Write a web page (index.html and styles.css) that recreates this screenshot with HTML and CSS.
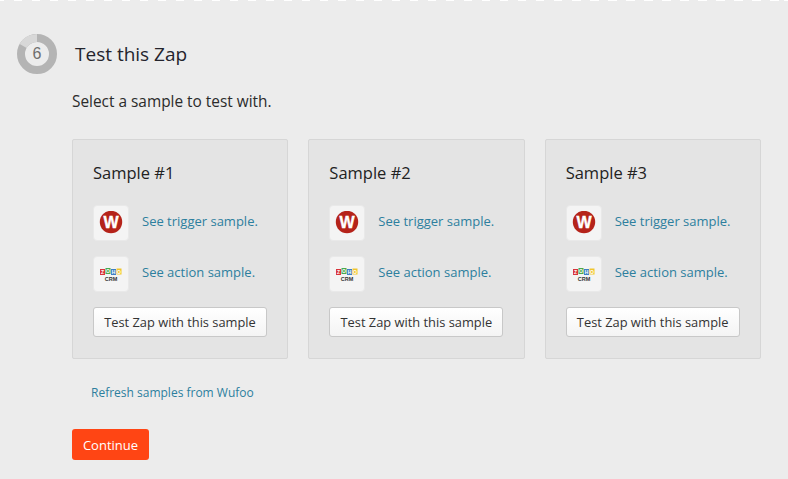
FILE: index.html
```html
<!DOCTYPE html>
<html lang="en">
<head>
  <meta charset="UTF-8">
  <title>Test this Zap</title>
  <link rel="stylesheet" href="styles.css">
</head>
<body>

<div class="dash-line"></div>

<!-- Step header -->
<div class="step-header">
  <div class="step-ring">
    <svg width="40" height="40" viewBox="0 0 40 40">
      <circle cx="20" cy="20" r="16" fill="none" stroke="#b4b4b4" stroke-width="8"/>
      <path d="M20 4 A16 16 0 0 0 6.140 12" fill="none" stroke="#d8d8d8" stroke-width="8"/>
    </svg>
    <span class="step-num">6</span>
  </div>
  <h1>Test this Zap</h1>
</div>

<div class="content">
  <p class="lead">Select a sample to test with.</p>

  <div class="samples">

    <div class="card">
      <h3>Sample #1</h3>
      <div class="row">
        <div class="app-icon">
          <svg width="24" height="24" viewBox="0 0 24 24">
            <circle cx="12" cy="11" r="11.200" fill="#b5231a"/>
            <text class="logo-w" x="12" y="16.500">W</text>
          </svg>
        </div>
        <a href="#">See trigger sample.</a>
      </div>
      <div class="row">
        <div class="app-icon">
          <svg width="24" height="16" viewBox="0 0 24 16">
            <rect x="1" y="3" width="5" height="6" fill="#d8343a"/>
            <rect x="6.500" y="2" width="5" height="6" fill="#4aa84f"/>
            <rect x="12" y="3" width="5" height="6" fill="#3d7fc4"/>
            <rect x="17.500" y="2.500" width="5" height="6" fill="#f0c52e"/>
            <text class="logo-zoho" x="3.500" y="8">Z</text>
            <text class="logo-zoho" x="9" y="7">O</text>
            <text class="logo-zoho" x="14.500" y="8">H</text>
            <text class="logo-zoho" x="20" y="7.500">O</text>
            <text class="logo-crm" x="12" y="15">CRM</text>
          </svg>
        </div>
        <a href="#">See action sample.</a>
      </div>
      <button class="btn">Test Zap with this sample</button>
    </div>

    <div class="card">
      <h3>Sample #2</h3>
      <div class="row">
        <div class="app-icon">
          <svg width="24" height="24" viewBox="0 0 24 24">
            <circle cx="12" cy="11" r="11.200" fill="#b5231a"/>
            <text class="logo-w" x="12" y="16.500">W</text>
          </svg>
        </div>
        <a href="#">See trigger sample.</a>
      </div>
      <div class="row">
        <div class="app-icon">
          <svg width="24" height="16" viewBox="0 0 24 16">
            <rect x="1" y="3" width="5" height="6" fill="#d8343a"/>
            <rect x="6.500" y="2" width="5" height="6" fill="#4aa84f"/>
            <rect x="12" y="3" width="5" height="6" fill="#3d7fc4"/>
            <rect x="17.500" y="2.500" width="5" height="6" fill="#f0c52e"/>
            <text class="logo-zoho" x="3.500" y="8">Z</text>
            <text class="logo-zoho" x="9" y="7">O</text>
            <text class="logo-zoho" x="14.500" y="8">H</text>
            <text class="logo-zoho" x="20" y="7.500">O</text>
            <text class="logo-crm" x="12" y="15">CRM</text>
          </svg>
        </div>
        <a href="#">See action sample.</a>
      </div>
      <button class="btn">Test Zap with this sample</button>
    </div>

    <div class="card">
      <h3>Sample #3</h3>
      <div class="row">
        <div class="app-icon">
          <svg width="24" height="24" viewBox="0 0 24 24">
            <circle cx="12" cy="11" r="11.200" fill="#b5231a"/>
            <text class="logo-w" x="12" y="16.500">W</text>
          </svg>
        </div>
        <a href="#">See trigger sample.</a>
      </div>
      <div class="row">
        <div class="app-icon">
          <svg width="24" height="16" viewBox="0 0 24 16">
            <rect x="1" y="3" width="5" height="6" fill="#d8343a"/>
            <rect x="6.500" y="2" width="5" height="6" fill="#4aa84f"/>
            <rect x="12" y="3" width="5" height="6" fill="#3d7fc4"/>
            <rect x="17.500" y="2.500" width="5" height="6" fill="#f0c52e"/>
            <text class="logo-zoho" x="3.500" y="8">Z</text>
            <text class="logo-zoho" x="9" y="7">O</text>
            <text class="logo-zoho" x="14.500" y="8">H</text>
            <text class="logo-zoho" x="20" y="7.500">O</text>
            <text class="logo-crm" x="12" y="15">CRM</text>
          </svg>
        </div>
        <a href="#">See action sample.</a>
      </div>
      <button class="btn">Test Zap with this sample</button>
    </div>

  </div>

  <a class="refresh" href="#">Refresh samples from Wufoo</a>
  <button class="continue">Continue</button>
</div>

</body>
</html>
```

FILE: styles.css
```css
* {
  box-sizing: border-box;
}
html, body {
  height: 100%;
}
body {
  margin: 0;
  font-family: 'Open Sans', sans-serif;
  background: #ececec;
  color: #333;
  overflow: hidden;
}
a {
  color: #2d7f9e;
  text-decoration: none;
}
.dash-line {
  height: 1px;
  background: repeating-linear-gradient(to right, #fff 0, #fff 8.500px, transparent 8.500px, transparent 18px);
  background-position: -4px 0;
  margin-bottom: 1px;
}
.step-header {
  display: flex;
  align-items: center;
  padding: 32px 0 0 17px;
}
.step-ring {
  position: relative;
  width: 40px;
  height: 40px;
}
.step-ring svg {
  display: block;
}
.step-num {
  position: absolute;
  top: 0;
  left: 0;
  width: 40px;
  line-height: 40px;
  text-align: center;
  font-family: 'Liberation Sans', sans-serif;
  font-size: 16px;
  color: #6f6f6f;
}
h1 {
  margin: 0 0 0 18px;
  font-size: 19px;
  font-weight: 400;
  color: #24242c;
}
.content {
  padding: 0 27px 0 72px;
}
.lead {
  margin: 16px 0 0;
  font-size: 15.400px;
  line-height: 24px;
  color: #2b2b2b;
}
.samples {
  display: flex;
  gap: 20px;
  margin-top: 25px;
}
.card {
  width: 216.500px;
  height: 220px;
  padding: 20px;
  background: #e4e4e4;
  border: 1px solid #d6d6d6;
  border-radius: 2px;
}
h3 {
  margin: 0 0 19px;
  font-size: 16.500px;
  line-height: 26px;
  font-weight: 400;
  color: #222;
}
.row {
  display: flex;
  align-items: center;
  gap: 13px;
  margin-bottom: 15px;
  font-size: 13px;
}
.row a {
  padding-bottom: 4px;
}
.app-icon {
  display: flex;
  align-items: center;
  justify-content: center;
  width: 36px;
  height: 36px;
  background: #f4f4f4;
  border: 1px solid #e9e9e9;
  border-radius: 4px;
}
.logo-w {
  font-family: 'Liberation Sans', sans-serif;
  font-size: 16px;
  font-weight: bold;
  text-anchor: middle;
  fill: #fff;
  stroke: #fff;
  stroke-width: 0.400px;
}
.logo-zoho {
  font-family: 'Liberation Sans', sans-serif;
  font-size: 5px;
  font-weight: bold;
  text-anchor: middle;
  fill: #fff;
}
.logo-crm {
  font-family: 'Liberation Sans', sans-serif;
  font-size: 5.500px;
  font-weight: bold;
  text-anchor: middle;
  fill: #333;
}
.btn {
  display: block;
  width: 174px;
  height: 30px;
  padding: 0;
  font-family: 'Open Sans', sans-serif;
  font-size: 12.850px;
  color: #333;
  background: linear-gradient(#fff, #f4f4f4);
  border: 1px solid #c8c8c8;
  border-radius: 3px;
}
.refresh {
  display: block;
  margin: 25px 0 0 19px;
  font-size: 12px;
  line-height: 17px;
}
.continue {
  display: block;
  margin-top: 28px;
  width: 77px;
  height: 31px;
  padding: 0;
  font-family: 'Open Sans', sans-serif;
  font-size: 13px;
  color: #fff;
  background: #ff4514;
  border: none;
  border-radius: 3px;
}
```
